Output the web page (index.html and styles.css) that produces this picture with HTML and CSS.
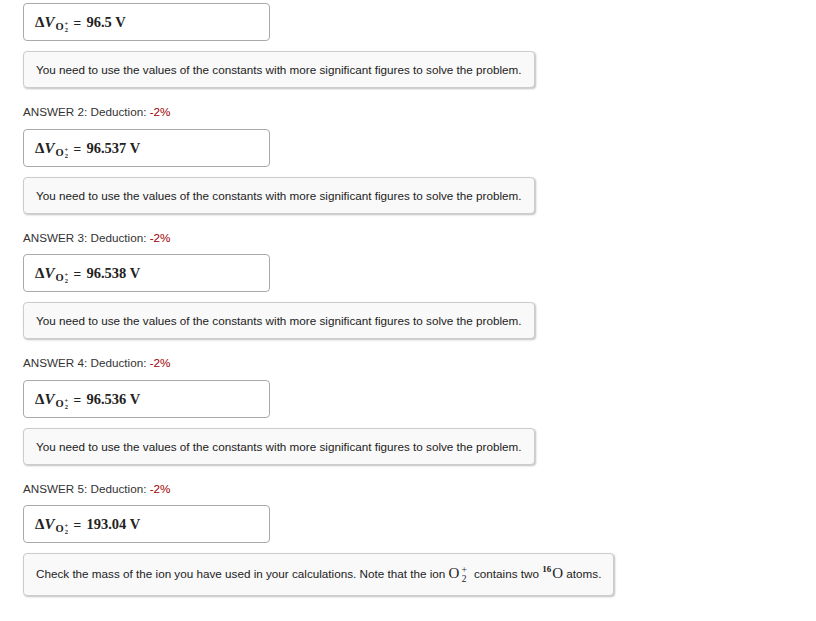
FILE: index.html
```html
<!DOCTYPE html>
<html lang="en">
<head>
    <meta charset="UTF-8">
    <title>Answers</title>
    <link rel="stylesheet" href="styles.css">
</head>
<body>
    <div class="respuestas">
        <div class="bloque primero">
            <div class="valor">
                <span class="mat"><b>Δ</b><i>V</i><span class="ion">O<span class="pila"><span>+</span><span>2</span></span></span></span>
                <span class="igual">=</span>
                <span class="mat num">96.5 V</span>
            </div>
            <div class="nota">You need to use the values of the constants with more significant figures to solve the problem.</div>
        </div>

        <div class="bloque">
            <div class="titulo">ANSWER 2: Deduction: <span class="menos">-2%</span></div>
            <div class="valor">
                <span class="mat"><b>Δ</b><i>V</i><span class="ion">O<span class="pila"><span>+</span><span>2</span></span></span></span>
                <span class="igual">=</span>
                <span class="mat num">96.537 V</span>
            </div>
            <div class="nota">You need to use the values of the constants with more significant figures to solve the problem.</div>
        </div>

        <div class="bloque">
            <div class="titulo">ANSWER 3: Deduction: <span class="menos">-2%</span></div>
            <div class="valor">
                <span class="mat"><b>Δ</b><i>V</i><span class="ion">O<span class="pila"><span>+</span><span>2</span></span></span></span>
                <span class="igual">=</span>
                <span class="mat num">96.538 V</span>
            </div>
            <div class="nota">You need to use the values of the constants with more significant figures to solve the problem.</div>
        </div>

        <div class="bloque">
            <div class="titulo">ANSWER 4: Deduction: <span class="menos">-2%</span></div>
            <div class="valor">
                <span class="mat"><b>Δ</b><i>V</i><span class="ion">O<span class="pila"><span>+</span><span>2</span></span></span></span>
                <span class="igual">=</span>
                <span class="mat num">96.536 V</span>
            </div>
            <div class="nota">You need to use the values of the constants with more significant figures to solve the problem.</div>
        </div>

        <div class="bloque">
            <div class="titulo">ANSWER 5: Deduction: <span class="menos">-2%</span></div>
            <div class="valor">
                <span class="mat"><b>Δ</b><i>V</i><span class="ion">O<span class="pila"><span>+</span><span>2</span></span></span></span>
                <span class="igual">=</span>
                <span class="mat num">193.04 V</span>
            </div>
            <div class="nota alta">Check the mass of the ion you have used in your calculations. Note that the ion <span class="quim">O<span class="pila grande"><span>+</span><span>2</span></span></span> contains two <span class="quim"><sup class="iso">16</sup>O</span> atoms.</div>
        </div>
    </div>
</body>
</html>
```

FILE: styles.css
```css
body {
    margin: 0;
    font-family: Arial, "Liberation Sans", sans-serif;
    font-size: 11.7px;
    color: #333;
    background: #fff;
}
.respuestas {
    padding: 3px 0 0 23px;
}
.bloque {
    margin-bottom: 16px;
}
.titulo {
    line-height: 16.5px;
    margin-bottom: 8px;
}
.menos {
    color: #a00000;
}
.valor {
    width: 247px;
    box-sizing: border-box;
    border: 1px solid #aaa;
    border-radius: 4px;
    background: #fff;
    padding: 8px 11px;
    height: 38px;
    line-height: 20px;
    color: #222;
    white-space: nowrap;
}
.mat {
    font-family: "Liberation Serif", "DejaVu Serif", serif;
    font-weight: bold;
    font-size: 15px;
}
.mat.num {
    font-size: 14.5px;
}
.mat i {
    font-style: italic;
}
.ion {
    font-size: 10.5px;
    vertical-align: -3px;
    margin-left: 1px;
}
.pila {
    display: inline-block;
    vertical-align: -2px;
    font-size: 6.5px;
    line-height: 6px;
    margin-left: 1px;
    text-align: center;
}
.pila span {
    display: block;
}
.igual {
    font-size: 13px;
    margin: 0 2px 0 2px;
}
.nota {
    display: inline-block;
    margin-top: 10px;
    background: #f9f9f9;
    border: 1px solid #ccc;
    border-radius: 4px;
    box-shadow: 1px 1px 2px rgba(0, 0, 0, 0.25);
    padding: 10px 12px 10px 12px;
    line-height: 15px;
    color: #222;
}
.nota.alta {
    padding: 11px 12px 11px 12px;
    line-height: 16px;
}
.quim {
    font-family: "Liberation Serif", "DejaVu Serif", serif;
    font-size: 15px;
    line-height: 16px;
}
.pila.grande {
    font-size: 9.5px;
    line-height: 9px;
    vertical-align: -4px;
    margin-left: 2px;
    margin-right: 4px;
}
.iso {
    font-size: 9px;
    font-weight: bold;
    vertical-align: 6px;
    line-height: 0;
    margin-right: 1px;
}
```
